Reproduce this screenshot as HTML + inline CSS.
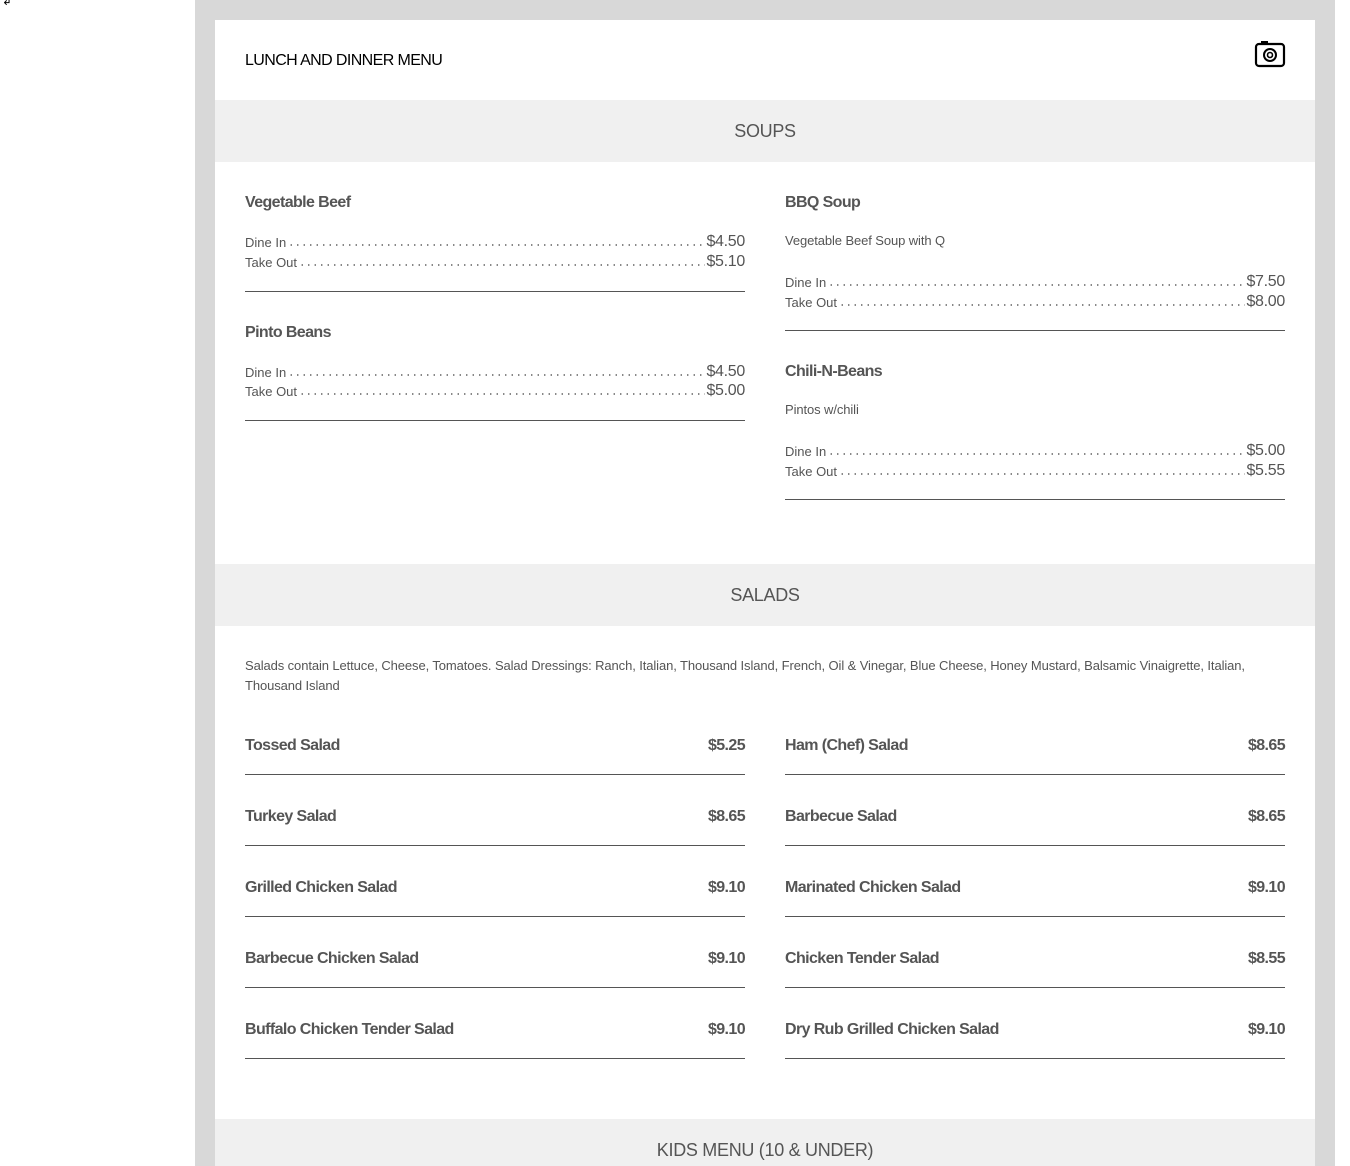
<!DOCTYPE html>
<html style="width:1350px;height:1166px;overflow:hidden"><head><style>
*{margin:0;padding:0;box-sizing:border-box}
body{width:1350px;height:1166px;background:#fff;position:relative;overflow:hidden;font-family:"Liberation Sans",sans-serif;color:#555}
.frame{position:absolute;left:195px;top:0;width:1140px;height:1166px;background:#d8d8d8}
.card{position:absolute;left:215px;top:20px;width:1100px;height:1146px;background:#fff}
.a{position:absolute;white-space:nowrap}
.band{position:absolute;left:215px;width:1100px;height:62px;background:#f0f0f0;text-align:center;line-height:62px;font-size:18px;color:#555;letter-spacing:-0.3px}
.name{font-size:16px;font-weight:bold;line-height:20px;letter-spacing:-0.6px}
.row{position:absolute;width:500px;height:20px;display:flex;align-items:flex-end}
.row .l{font-size:13px;line-height:16px;padding-bottom:0px}
.row .d{flex:1;height:4px;margin:0 1px 4px 2px;background:radial-gradient(circle,#777 0.8px,transparent 1px) 0 0/6.5px 4px repeat-x}
.row .p{font-size:16px;line-height:18px;letter-spacing:-0.3px}
.hr{position:absolute;width:500px;height:1px;background:#555}
.desc{font-size:13px;line-height:20px;letter-spacing:-0.1px}
.s{position:absolute;width:500px;display:flex;justify-content:space-between;font-size:16px;font-weight:bold;line-height:20px;letter-spacing:-0.6px}
</style></head><body>
<div class="a" style="left:2px;top:-6px;font-size:12px;color:#000">↲</div>
<div class="frame"></div>
<div class="card"></div>
<div class="a" style="left:245px;top:51px;font-size:16px;color:#000;line-height:20px;letter-spacing:-0.6px">LUNCH AND DINNER MENU</div>
<svg class="a" style="left:1254px;top:40px" width="32" height="28" viewBox="0 0 32 28"><rect x="7" y="1" width="7" height="3" fill="#000"/><rect x="2" y="4" width="28" height="22" rx="3" fill="none" stroke="#000" stroke-width="2.2"/><circle cx="16" cy="15" r="6" fill="none" stroke="#000" stroke-width="2"/><circle cx="16" cy="15" r="2.5" fill="none" stroke="#000" stroke-width="1.6"/></svg>

<div class="band" style="top:100px">SOUPS</div>

<div class="a name" style="left:245px;top:193px">Vegetable Beef</div>
<div class="row" style="left:245px;top:231px"><span class="l">Dine In</span><span class="d"></span><span class="p">$4.50</span></div>
<div class="row" style="left:245px;top:251px"><span class="l">Take Out</span><span class="d"></span><span class="p">$5.10</span></div>
<div class="hr" style="left:245px;top:291px"></div>
<div class="a name" style="left:245px;top:323px">Pinto Beans</div>
<div class="row" style="left:245px;top:361px"><span class="l">Dine In</span><span class="d"></span><span class="p">$4.50</span></div>
<div class="row" style="left:245px;top:380px"><span class="l">Take Out</span><span class="d"></span><span class="p">$5.00</span></div>
<div class="hr" style="left:245px;top:420px"></div>

<div class="a name" style="left:785px;top:193px">BBQ Soup</div>
<div class="a desc" style="left:785px;top:231px">Vegetable Beef Soup with Q</div>
<div class="row" style="left:785px;top:271px"><span class="l">Dine In</span><span class="d"></span><span class="p">$7.50</span></div>
<div class="row" style="left:785px;top:291px"><span class="l">Take Out</span><span class="d"></span><span class="p">$8.00</span></div>
<div class="hr" style="left:785px;top:330px"></div>
<div class="a name" style="left:785px;top:362px">Chili-N-Beans</div>
<div class="a desc" style="left:785px;top:400px">Pintos w/chili</div>
<div class="row" style="left:785px;top:440px"><span class="l">Dine In</span><span class="d"></span><span class="p">$5.00</span></div>
<div class="row" style="left:785px;top:460px"><span class="l">Take Out</span><span class="d"></span><span class="p">$5.55</span></div>
<div class="hr" style="left:785px;top:499px"></div>

<div class="band" style="top:564px">SALADS</div>
<div class="a desc" style="left:245px;top:656px;white-space:normal;width:1040px">Salads contain Lettuce, Cheese, Tomatoes. Salad Dressings: Ranch, Italian, Thousand Island, French, Oil &amp; Vinegar, Blue Cheese, Honey Mustard, Balsamic Vinaigrette, Italian, Thousand Island</div>

<div class="s" style="left:245px;top:736px"><span>Tossed Salad</span><span>$5.25</span></div>
<div class="hr" style="left:245px;top:774px"></div>
<div class="s" style="left:785px;top:736px"><span>Ham (Chef) Salad</span><span>$8.65</span></div>
<div class="hr" style="left:785px;top:774px"></div>
<div class="s" style="left:245px;top:807px"><span>Turkey Salad</span><span>$8.65</span></div>
<div class="hr" style="left:245px;top:845px"></div>
<div class="s" style="left:785px;top:807px"><span>Barbecue Salad</span><span>$8.65</span></div>
<div class="hr" style="left:785px;top:845px"></div>
<div class="s" style="left:245px;top:878px"><span>Grilled Chicken Salad</span><span>$9.10</span></div>
<div class="hr" style="left:245px;top:916px"></div>
<div class="s" style="left:785px;top:878px"><span>Marinated Chicken Salad</span><span>$9.10</span></div>
<div class="hr" style="left:785px;top:916px"></div>
<div class="s" style="left:245px;top:949px"><span>Barbecue Chicken Salad</span><span>$9.10</span></div>
<div class="hr" style="left:245px;top:987px"></div>
<div class="s" style="left:785px;top:949px"><span>Chicken Tender Salad</span><span>$8.55</span></div>
<div class="hr" style="left:785px;top:987px"></div>
<div class="s" style="left:245px;top:1020px"><span>Buffalo Chicken Tender Salad</span><span>$9.10</span></div>
<div class="hr" style="left:245px;top:1058px"></div>
<div class="s" style="left:785px;top:1020px"><span>Dry Rub Grilled Chicken Salad</span><span>$9.10</span></div>
<div class="hr" style="left:785px;top:1058px"></div>

<div class="band" style="top:1119px;height:47px">KIDS MENU (10 &amp; UNDER)</div>
</body></html>
